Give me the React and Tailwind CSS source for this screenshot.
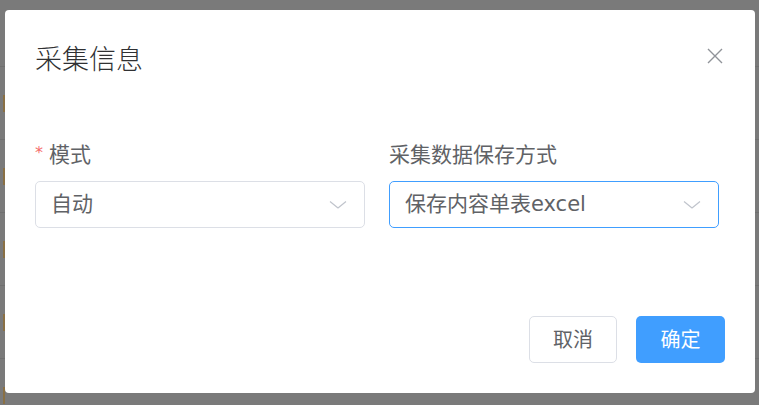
import { useState } from 'react'

const ROWS = [0, 1, 2, 3, 4, 5]

function Chevron() {
  return (
    <svg width="18" height="10" viewBox="0 0 18 10" fill="none" className="shrink-0">
      <path d="M1 1.5 L9 8 L17 1.5" stroke="#c0c4cc" strokeWidth="1.2" strokeLinejoin="round" />
    </svg>
  )
}

function Select({ value, focused }) {
  return (
    <div
      className={`flex h-[47px] w-[330px] items-center justify-between rounded-[5px] border bg-white pl-[15px] pr-[17px] ${
        focused ? 'border-[#409eff]' : 'border-[#dcdfe6]'
      }`}
    >
      <span className="text-[21px] leading-none text-[#606266]">{value}</span>
      <Chevron />
    </div>
  )
}

export default function App() {
  const [mode] = useState('自动')
  const [saveType] = useState('保存内容单表excel')

  return (
    <div
      className="relative h-[405px] w-[759px] overflow-hidden bg-[#7a7a7a]"
      style={{ fontFamily: '"DejaVu Sans", "Noto Sans CJK SC", sans-serif' }}
    >
      {/* page underneath the mask */}
      <div className="absolute inset-0 pt-[66px]">
        {ROWS.map((r) => (
          <div key={r} className="flex h-[73px] items-center border-t border-[#707070]">
            <div className="ml-[3px] h-[17px] w-[2px] bg-[#8a7044]" />
          </div>
        ))}
      </div>

      {/* dialog */}
      <div className="absolute inset-0 pl-[5px] pt-[10px]">
        <div className="flex h-[383px] w-[750px] flex-col rounded-[4px] bg-white px-[30px] pb-[30px] pt-[35px]">
          {/* header */}
          <div className="flex items-center justify-between">
            <h2 className="text-[27px] leading-[30px] font-light text-[#303133]">采集信息</h2>
            <button className="-mr-[1px] -mt-[8px] p-[3px]">
              <svg width="16" height="16" viewBox="0 0 16 16" fill="none">
                <path d="M1 1 L15 15 M15 1 L1 15" stroke="#909399" strokeWidth="1.4" />
              </svg>
            </button>
          </div>

          {/* form */}
          <div className="mt-[65px] flex gap-[24px]">
            <div className="flex flex-col">
              <label className="flex items-center text-[21px] leading-[30px] text-[#606266]">
                <span className="mr-[6px] -mt-[4px] text-[16px] text-[#f56c6c]">*</span>
                模式
              </label>
              <div className="mt-[11px]">
                <Select value={mode} />
              </div>
            </div>
            <div className="flex flex-col">
              <label className="text-[21px] leading-[30px] text-[#606266]">采集数据保存方式</label>
              <div className="mt-[11px]">
                <Select value={saveType} focused />
              </div>
            </div>
          </div>

          {/* footer */}
          <div className="mt-auto flex justify-end gap-[19px]">
            <button className="h-[47px] w-[88px] rounded-[5px] border border-[#dcdfe6] bg-white text-[20px] text-[#606266]">
              取消
            </button>
            <button className="h-[47px] w-[89px] rounded-[5px] bg-[#409eff] text-[20px] text-white">
              确定
            </button>
          </div>
        </div>
      </div>
    </div>
  )
}
